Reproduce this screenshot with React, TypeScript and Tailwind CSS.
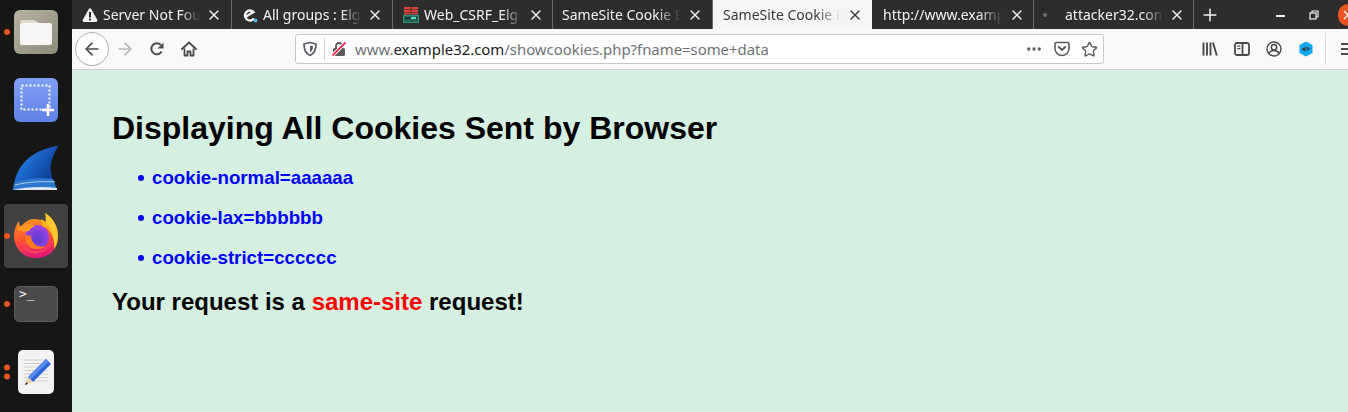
import { ArrowLeft, ArrowRight, Ellipsis, Plus, Star, X } from 'lucide-react';

const uiFont = "font-['Noto_Sans',sans-serif]";

function WarningIcon() {
  return (
    <svg width="16" height="16" viewBox="0 0 16 16">
      <path d="M8 1.2c-.5 0-.9.3-1.2.7L.8 12.7c-.6 1.1.1 2.3 1.3 2.3h11.8c1.2 0 1.9-1.2 1.3-2.3L9.2 1.9C8.9 1.5 8.500 1.2 8 1.2z" fill="#f5f5f5" />
      <rect x="7" y="5" width="2" height="5.500" fill="#2f2c2c" />
      <rect x="7" y="11.500" width="2" height="2" fill="#2f2c2c" />
    </svg>
  );
}

function ElggIcon() {
  return (
    <svg width="16" height="16" viewBox="0 0 16 16" fill="none">
      <path d="M4 9.500 11.500 5A5 5 0 1 0 12 11.500" stroke="#f5f5f5" strokeWidth="2.400" />
      <circle cx="13.500" cy="13.500" r="2" fill="#4db6e6" />
    </svg>
  );
}

function CsrfIcon() {
  return (
    <svg width="16" height="16" viewBox="0 0 16 16">
      <rect width="16" height="16" fill="#1f3a36" />
      <rect x="1" y="0" width="14" height="7.500" fill="#d9453a" />
      <rect x="1" y="2.200" width="14" height="0.800" fill="#5a2a28" />
      <rect x="1" y="5" width="14" height="0.800" fill="#5a2a28" />
      <rect x="7.500" y="0" width="1" height="7.500" fill="#5a2a28" />
      <rect x="0" y="8" width="16" height="8" fill="#2c8f7c" />
      <rect x="1.500" y="9.500" width="13" height="5" fill="#1f3a36" />
      <rect x="8" y="10" width="5" height="2" fill="#5ce0c6" />
      <rect x="2.500" y="12.500" width="11" height="1" fill="#2c8f7c" />
    </svg>
  );
}

type TabData = {
  title: string;
  icon?: React.ReactNode;
  active?: boolean;
  dot?: boolean;
  width: string;
  pad: string;
};

const tabs: TabData[] = [
  { title: 'Server Not Fou', icon: <WarningIcon />, width: 'w-[160px]', pad: 'pl-[10px] pr-[9px]' },
  { title: 'All groups : Elg', icon: <ElggIcon />, width: 'w-[161px]', pad: 'pl-[10px] pr-[9px]' },
  { title: 'Web_CSRF_Elg', icon: <CsrfIcon />, width: 'w-[160px]', pad: 'pl-[10px] pr-[8px]' },
  { title: 'SameSite Cookie E', width: 'w-[160px]', pad: 'pl-[9px] pr-[9px]' },
  { title: 'SameSite Cookie E', active: true, width: 'w-[159px]', pad: 'pl-[10px] pr-[9px]' },
  { title: 'http://www.examp', width: 'w-[162px]', pad: 'pl-[11px] pr-[8px]' },
  { title: 'attacker32.com', dot: true, width: 'w-[160px]', pad: 'pl-[10px] pr-[8px]' },
];

function Tab({ tab }: { tab: TabData }) {
  return (
    <div
      className={`${tab.width} ${tab.pad} h-[29px] shrink-0 flex items-center ${
        tab.active ? 'bg-[#f5f5f5] text-[#3a3a3a]' : 'border-r border-[#6a6868] text-[#f2f2f2]'
      }`}
    >
      {tab.icon && <span className="w-[16px] h-[16px] mr-[5px] shrink-0 flex">{tab.icon}</span>}
      {tab.dot && <span className="w-[4px] h-[4px] rounded-full bg-[#6f6d6d] ml-[-1px] mr-[18px] shrink-0" />}
      <span className="flex-1 min-w-0 overflow-hidden whitespace-nowrap text-[14px] leading-[29px] [mask-image:linear-gradient(to_right,black_78%,transparent_98%)]">
        {tab.title}
      </span>
      <X size={16} strokeWidth={2} className="ml-[4px] shrink-0" />
    </div>
  );
}

function ReloadIcon() {
  return (
    <svg width="16" height="16" viewBox="0 0 16 16" fill="none">
      <path d="M12.600 10.500A5.500 5.500 0 1 1 11.800 4" stroke="#4a4a4a" strokeWidth="2" />
      <path d="M14.500 1.500v6h-6z" fill="#4a4a4a" />
    </svg>
  );
}

function HomeIcon() {
  return (
    <svg width="16" height="16" viewBox="0 0 16 16" fill="none">
      <path d="M1 8 8 1.500 15 8" stroke="#4a4a4a" strokeWidth="1.900" strokeLinecap="round" strokeLinejoin="round" />
      <path d="M3.500 7.500V14.500H6.500V10.500H9.500V14.500H12.500V7.500" stroke="#4a4a4a" strokeWidth="1.800" strokeLinejoin="round" />
    </svg>
  );
}

function ShieldIcon() {
  return (
    <svg width="16" height="16" viewBox="0 0 16 16" fill="none">
      <path d="M8 1.500 14 3c0 5.500-1.500 9.500-6 11.500C3.500 12.500 2 8.500 2 3z" stroke="#5b5b66" strokeWidth="1.800" strokeLinejoin="round" />
      <path d="M8 4.500 11 5.300c0 2.700-.8 4.700-3 6z" fill="#5b5b66" />
    </svg>
  );
}

function BrokenLockIcon() {
  return (
    <svg width="14" height="14" viewBox="0 0 14 14" fill="none">
      <path d="M4 6V4a3 3 0 0 1 6 0v2" stroke="#5b5b5b" strokeWidth="1.800" />
      <rect x="1" y="6" width="12" height="8" rx="1.500" fill="#5b5b5b" />
      <path d="M0 14 13.500 0.500" stroke="#ffffff" strokeWidth="3.500" />
      <path d="M0.500 13.500 13.500 0.500" stroke="#ec1f4e" strokeWidth="1.700" />
    </svg>
  );
}

function PocketIcon() {
  return (
    <svg width="16" height="16" viewBox="0 0 16 16" fill="none">
      <path d="M2.500 1.500h11A1.500 1.500 0 0 1 15 3v4.500a7 7 0 0 1-14 0V3a1.500 1.500 0 0 1 1.500-1.500z" stroke="#5b5b5b" strokeWidth="1.600" />
      <path d="m4.800 6 3.200 3 3.200-3" stroke="#5b5b5b" strokeWidth="2" strokeLinecap="round" strokeLinejoin="round" />
    </svg>
  );
}

function LibraryIcon() {
  return (
    <svg width="16" height="16" viewBox="0 0 16 16" fill="none" stroke="#4a4a4a" strokeWidth="1.900">
      <path d="M1.500 1.500v13M5 1.500v13M8.500 1.500v13M11 1.500l3.800 13" />
    </svg>
  );
}

function SidebarIcon() {
  return (
    <svg width="16" height="16" viewBox="0 0 16 16" fill="none">
      <rect x="1" y="2" width="14" height="12" rx="2" stroke="#4a4a4a" strokeWidth="1.800" />
      <path d="M8.500 2v12" stroke="#4a4a4a" strokeWidth="1.800" />
      <path d="M3.300 5.200h3M3.300 7.700h3" stroke="#4a4a4a" strokeWidth="1.200" />
    </svg>
  );
}

function AccountIcon() {
  return (
    <svg width="16" height="16" viewBox="0 0 16 16" fill="none">
      <circle cx="8" cy="8" r="7" stroke="#4a4a4a" strokeWidth="1.400" />
      <circle cx="8" cy="6.300" r="2.700" stroke="#4a4a4a" strokeWidth="1.500" />
      <path d="M3 12.500c1-2.500 3-3 5-3s4 .5 5 3" stroke="#4a4a4a" strokeWidth="1.600" />
    </svg>
  );
}

function ExtensionIcon() {
  return (
    <svg width="16" height="16" viewBox="0 0 16 16">
      <path d="M8 0.500 14.500 4v8L8 15.500 1.500 12V4z" fill="#12a9ec" />
      <path d="M3.500 8.300 7.500 5.800v5z" fill="#2c3a44" />
      <path d="M12.500 7.700 8.500 5.200v5z" fill="#2c3a44" opacity="0.750" />
    </svg>
  );
}

function FilesIcon() {
  return (
    <div className="w-[44px] h-[44px] rounded-[6px] bg-gradient-to-br from-[#b8b3a3] to-[#8e8a7c] flex items-center justify-center">
      <svg width="34" height="30" viewBox="0 0 34 30">
        <path d="M1 6a3 3 0 0 1 3-3h11l5 3z" fill="#dedbd4" />
        <rect x="1" y="6" width="32" height="22" rx="2.500" fill="#f8f6f4" />
      </svg>
    </div>
  );
}

function ScreenshotIcon() {
  return (
    <div className="w-[44px] h-[44px] rounded-[6px] bg-gradient-to-b from-[#7f9ff5] to-[#5f81e8] flex items-center justify-center">
      <svg width="36" height="36" viewBox="0 0 36 36" fill="none">
        <rect x="3.500" y="3.500" width="28" height="24" stroke="#ffffff" strokeWidth="2" strokeDasharray="2 2" />
        <path d="M30 22v12M24 28h12" stroke="#ffffff" strokeWidth="2.500" />
      </svg>
    </div>
  );
}

function WiresharkIcon() {
  return (
    <svg width="46" height="46" viewBox="0 0 46 46">
      <defs>
        <linearGradient id="fin" x1="0" y1="0.100" x2="0.900" y2="0.700">
          <stop offset="0" stopColor="#8fc0f0" />
          <stop offset="0.350" stopColor="#1f6fd4" />
          <stop offset="1" stopColor="#0a3a92" />
        </linearGradient>
      </defs>
      <path d="M0 45C2 28 10 7 44 1l2-1C40 10 35 20 39 32l5 13z" fill="url(#fin)" />
      <path d="M2 37c12-3 26-5 38-3l4 11H0z" fill="#2f78cf" />
      <path d="M0 45c12-3 28-4 44-2v2z" fill="#dce8f4" />
      <path d="M2 40c12-3 26-4 40-3" stroke="#a9cbec" strokeWidth="1" fill="none" />
    </svg>
  );
}

function FirefoxIcon() {
  return (
    <svg width="46" height="46" viewBox="0 0 46 46">
      <defs>
        <linearGradient id="ffBody" x1="0.300" y1="0" x2="0.500" y2="1">
          <stop offset="0" stopColor="#ffa51f" />
          <stop offset="0.550" stopColor="#ff5330" />
          <stop offset="1" stopColor="#e4177c" />
        </linearGradient>
        <radialGradient id="ffGlobe" cx="0.500" cy="0.600" r="0.600">
          <stop offset="0" stopColor="#5a3cd0" />
          <stop offset="1" stopColor="#a043e8" />
        </radialGradient>
      </defs>
      <path d="M23 45C10 45 1 35 1 23 1 17 3 12 6 8c0 3 1 5 2 6 3-5 8-8 13-8 7 0 13 3 15 8 0-5-1-10-4-14 8 5 13 13 13 23 0 13-9 22-22 22z" fill="url(#ffBody)" />
      <path d="M32 0c8 5 13 13 13 23 0 5-1 9-4 13 1-9-2-18-9-23 1-4 1-9 0-13z" fill="#ffc82e" />
      <path d="M28 6c7 3 11 9 11 16-2-5-6-8-10-9z" fill="#ffb21f" />
      <circle cx="24" cy="24" r="12" fill="url(#ffGlobe)" />
      <path d="M4 16c5-5 12-6 18-3-3 1-5 3-6 5-4 1-9 0-12-2z" fill="#ff9a1f" />
      <path d="M12 22c-1 8 5 15 13 14 3 0 6-1 8-3-3 1-6 1-8 0-4-1-7-6-7-10z" fill="#ff7a1f" />
      <path d="M8 30c3 8 10 11 17 10 7-1 12-6 13-12-2 6-8 10-15 10-6 0-12-3-15-8z" fill="#ff4066" />
    </svg>
  );
}

function TerminalIcon() {
  return (
    <div className="w-[44px] h-[36px] rounded-[5px] bg-[#4a4a4a] border border-[#5c5c5c] relative">
      <span className="absolute left-[4px] top-[-2px] text-[#f4f4f4] text-[13px] leading-[18px] font-['DejaVu_Sans_Mono',monospace]">&gt;_</span>
    </div>
  );
}

function EditorIcon() {
  return (
    <div className="w-[36px] h-[44px] rounded-[5px] bg-[#f3f3f3] flex items-center justify-center">
      <svg width="32" height="38" viewBox="0 0 32 38" fill="none">
        <path d="M4 7h24M4 10.500h24M4 14h24M4 17.500h24M4 21h24M4 24.500h24M4 28h24" stroke="#cfcfcf" strokeWidth="1" />
        <path d="M26 6 31 11 13 29 8 24z" fill="#2f66d8" />
        <path d="M26 6 28.500 8.500 10.500 26.500 8 24z" fill="#5b8cf0" />
        <path d="M8 24 13 29 5 32z" fill="#e8cfa8" />
        <path d="M6.200 29 8 31 5 32z" fill="#333333" />
      </svg>
    </div>
  );
}

function RunDots({ count }: { count: number }) {
  return (
    <div className="absolute left-[4px] top-1/2 -translate-y-1/2 flex flex-col gap-[3px]">
      {Array.from({ length: count }).map((_, i) => (
        <span key={i} className="block w-[6px] h-[6px] rounded-full bg-[#e95420]" />
      ))}
    </div>
  );
}

const cookies = ['cookie-normal=aaaaaa', 'cookie-lax=bbbbbb', 'cookie-strict=cccccc'];

export default function App() {
  return (
    <div className={`w-[1348px] h-[412px] flex overflow-hidden ${uiFont}`}>
      <aside className="w-[72px] h-full shrink-0 bg-[#161616] flex flex-col items-center">
        <div className="relative w-full h-[60px] flex items-center justify-center mt-[2px]">
          <RunDots count={1} />
          <FilesIcon />
        </div>
        <div className="w-full h-[46px] mt-[15px] flex items-center justify-center">
          <ScreenshotIcon />
        </div>
        <div className="w-full h-[60px] mt-[15px] flex items-center justify-center">
          <WiresharkIcon />
        </div>
        <div className="relative w-[64px] h-[64px] mt-[6px] rounded-[4px] bg-[#404040] flex items-center justify-center">
          <span className="absolute left-0 top-[29px] w-[6px] h-[6px] rounded-full bg-[#e95420]" />
          <FirefoxIcon />
        </div>
        <div className="relative w-full h-[36px] mt-[18px] flex items-center justify-center">
          <RunDots count={1} />
          <TerminalIcon />
        </div>
        <div className="relative w-full h-[44px] mt-[28px] flex items-center justify-center">
          <RunDots count={2} />
          <EditorIcon />
        </div>
      </aside>

      <div className="flex-1 min-w-0 flex flex-col">
        <div className="h-[29px] shrink-0 bg-[#2f2c2c] flex items-center">
          {tabs.map((tab, i) => (
            <Tab key={i} tab={tab} />
          ))}
          <Plus size={20} strokeWidth={1.800} className="text-[#f2f2f2] ml-[6px] shrink-0" />
          <div className="flex-1" />
          <span className="w-[9px] h-[2px] bg-[#f2f2f2] mr-[24px] mt-[3px]" />
          <svg width="10" height="10" viewBox="0 0 10 10" fill="none" stroke="#f2f2f2" strokeWidth="1.200" className="mr-[19px]">
            <rect x="1" y="3" width="6" height="6" />
            <path d="M3 3V1h6v6H7" />
          </svg>
          <span className="w-[10px] h-[22px] rounded-l-full bg-[#e95420] flex items-center pl-[3px] text-white overflow-hidden">
            <X size={14} strokeWidth={2.500} className="shrink-0" />
          </span>
        </div>

        <div className="h-[41px] shrink-0 bg-[#f9f9f9] border-b border-[#cfcfcf] flex items-center">
          <div className="ml-[3px] w-[34px] h-[34px] rounded-full border border-[#b1b1b1] bg-white flex items-center justify-center">
            <ArrowLeft size={20} strokeWidth={2} className="text-[#4a4a4a]" />
          </div>
          <ArrowRight size={20} strokeWidth={2} className="ml-[6px] text-[#b5b5b5]" />
          <span className="ml-[14px]"><ReloadIcon /></span>
          <span className="ml-[16px]"><HomeIcon /></span>

          <div className="ml-[98px] w-[809px] h-[30px] rounded-[3px] border border-[#c8c8c8] bg-white flex items-center pl-[6px] pr-[5px]">
            <ShieldIcon />
            <span className="w-px h-[22px] bg-[#d0d0d0] ml-[6px] mr-[7px]" />
            <BrokenLockIcon />
            <span className="ml-[9px] text-[14.900px] text-[#6f7378] whitespace-nowrap">
              www.<span className="text-[#1a1a1a]">example32.com</span>/showcookies.php?fname=some+data
            </span>
            <div className="flex-1" />
            <Ellipsis size={18} strokeWidth={2.400} className="text-[#5b5b5b] mr-[11px]" />
            <PocketIcon />
            <Star size={17} strokeWidth={2} className="text-[#5b5b5b] ml-[11px]" />
          </div>

          <div className="ml-[98px] flex items-center gap-[16px]">
            <LibraryIcon />
            <SidebarIcon />
            <AccountIcon />
            <ExtensionIcon />
          </div>
          <span className="ml-[11px] w-px h-[32px] bg-[#dcdcdc]" />
          <div className="ml-[15px] flex-1 flex flex-col gap-[3px]">
            <span className="h-[2px] bg-[#4a4a4a]" />
            <span className="h-[2px] bg-[#4a4a4a]" />
            <span className="h-[2px] bg-[#4a4a4a]" />
          </div>
        </div>

        <main className="flex-1 bg-[#d5efe0] px-[40px] pt-[40px] font-['Liberation_Sans',Arial,sans-serif] font-bold text-black">
          <h1 className="text-[32px] leading-[37px]">Displaying All Cookies Sent by Browser</h1>
          <ul className="pl-[26px] mt-[20px] text-[#0000ff] flex flex-col gap-[18px]">
            {cookies.map((cookie) => (
              <li key={cookie} className="flex items-center gap-[8px] h-[22px]">
                <span className="w-[6px] h-[6px] rounded-full bg-[#0000ff] shrink-0" />
                <span className="text-[18.720px] leading-[22px]">{cookie}</span>
              </li>
            ))}
          </ul>
          <p className="mt-[19px] text-[24px] leading-[28px]">
            Your request is a <span className="text-[#ff0000]">same-site</span> request!
          </p>
        </main>
      </div>
    </div>
  );
}
